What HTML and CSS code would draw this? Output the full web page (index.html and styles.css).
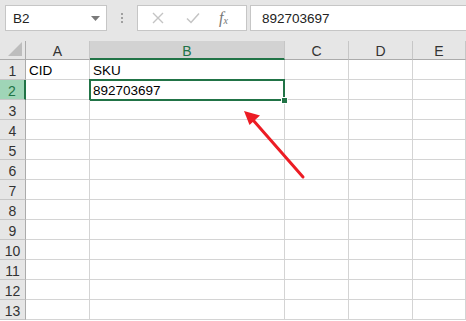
FILE: index.html
```html
<!DOCTYPE html>
<html lang="en">
<head>
    <meta charset="UTF-8">
    <title>Sheet</title>
    <link rel="stylesheet" href="styles.css">
</head>
<body>
    <div class="toolbar">
        <div class="name-box">
            <span>B2</span>
            <svg class="caret" width="9" height="5" viewBox="0 0 9 5"><path d="M0 0h9L4.5 5z" fill="#7a7a7a"/></svg>
        </div>
        <div class="grip"><i></i><i></i><i></i></div>
        <div class="buttons">
            <svg width="12" height="12" viewBox="0 0 12 12"><path d="M1 1l10 10M11 1L1 11" stroke="#c4c4c4" stroke-width="1.4"/></svg>
            <svg width="14" height="12" viewBox="0 0 14 12"><path d="M1 6.5l4 4L13 1.5" stroke="#c4c4c4" stroke-width="1.5" fill="none"/></svg>
            <span class="fx">f<sub>x</sub></span>
        </div>
        <div class="formula">892703697</div>
    </div>

    <div class="sheet">
        <div class="corner"><svg width="14" height="14" viewBox="0 0 14 14"><path d="M14 0v14H0z" fill="#bdbdbd"/></svg></div>
        <div class="col-head">A</div>
        <div class="col-head sel">B</div>
        <div class="col-head">C</div>
        <div class="col-head">D</div>
        <div class="col-head">E</div>

        <div class="row-head">1</div>
        <div class="cell">CID</div>
        <div class="cell">SKU</div>
        <div class="cell"></div><div class="cell"></div><div class="cell"></div>

        <div class="row-head sel">2</div>
        <div class="cell"></div>
        <div class="cell active">892703697<span class="handle"></span></div>
        <div class="cell"></div><div class="cell"></div><div class="cell"></div>

        <div class="row-head">3</div><div class="cell"></div><div class="cell"></div><div class="cell"></div><div class="cell"></div><div class="cell"></div>
        <div class="row-head">4</div><div class="cell"></div><div class="cell"></div><div class="cell"></div><div class="cell"></div><div class="cell"></div>
        <div class="row-head">5</div><div class="cell"></div><div class="cell"></div><div class="cell"></div><div class="cell"></div><div class="cell"></div>
        <div class="row-head">6</div><div class="cell"></div><div class="cell"></div><div class="cell"></div><div class="cell"></div><div class="cell"></div>
        <div class="row-head">7</div><div class="cell"></div><div class="cell"></div><div class="cell"></div><div class="cell"></div><div class="cell"></div>
        <div class="row-head">8</div><div class="cell"></div><div class="cell"></div><div class="cell"></div><div class="cell"></div><div class="cell"></div>
        <div class="row-head">9</div><div class="cell"></div><div class="cell"></div><div class="cell"></div><div class="cell"></div><div class="cell"></div>
        <div class="row-head">10</div><div class="cell"></div><div class="cell"></div><div class="cell"></div><div class="cell"></div><div class="cell"></div>
        <div class="row-head">11</div><div class="cell"></div><div class="cell"></div><div class="cell"></div><div class="cell"></div><div class="cell"></div>
        <div class="row-head">12</div><div class="cell"></div><div class="cell"></div><div class="cell"></div><div class="cell"></div><div class="cell"></div>
        <div class="row-head">13</div><div class="cell"></div><div class="cell"></div><div class="cell"></div><div class="cell"></div><div class="cell"></div>
    </div>

    <!-- annotation arrow -->
    <svg class="arrow" width="466" height="321" viewBox="0 0 466 321">
        <path d="M303 177L253 120" stroke="#ec1c24" stroke-width="3" stroke-linecap="round"/>
        <path d="M244 111l16 4.5-10.5 9.5z" fill="#ec1c24"/>
    </svg>
</body>
</html>
```

FILE: styles.css
```css
*{
    margin: 0;
    padding: 0;
    box-sizing: border-box;
}

body{
    width: 466px;
    height: 321px;
    overflow: hidden;
    background: #ffffff;
    font-family: "Liberation Sans", Arial, sans-serif;
    font-size: 13px;
    color: #000000;
    position: relative;
}

.toolbar{
    height: 41px;
    background: #e6e6e6;
    display: flex;
    align-items: flex-start;
    padding: 5px 0 0 5px;
}

.name-box{
    width: 102px;
    height: 26px;
    background: #ffffff;
    border: 1px solid #c6c6c6;
    display: flex;
    align-items: center;
    justify-content: space-between;
    padding: 0 6px 0 7px;
    font-size: 13.5px;
    color: #222;
}

.grip{
    width: 30px;
    height: 26px;
    display: flex;
    flex-direction: column;
    align-items: center;
    justify-content: center;
    gap: 2px;
}

.grip i{
    width: 2px;
    height: 2px;
    background: #a0a0a0;
}

.buttons{
    width: 110px;
    height: 26px;
    background: #ffffff;
    border: 1px solid #c6c6c6;
    display: flex;
    align-items: center;
    padding-left: 14px;
    gap: 22px;
}

.buttons .fx{
    font-family: "Liberation Serif", serif;
    font-style: italic;
    font-size: 16px;
    color: #777;
    margin-left: -3px;
}

.buttons .fx sub{
    font-size: 10px;
    vertical-align: -1px;
}

.formula{
    flex: 1;
    margin-left: 3px;
    height: 26px;
    background: #ffffff;
    border: 1px solid #c6c6c6;
    border-right: none;
    padding-left: 11px;
    display: flex;
    align-items: center;
    font-size: 13.5px;
    color: #222;
}

.sheet{
    display: grid;
    grid-template-columns: 26px 64px 195px 64px 64px 1fr;
    grid-template-rows: 19px repeat(13, 20px);
}

.corner,
.col-head,
.row-head{
    background: #e6e6e6;
    color: #333;
    display: flex;
    align-items: center;
    justify-content: center;
    border-right: 1px solid #ababab;
    border-bottom: 1px solid #ababab;
    font-size: 14px;
}

.corner{
    align-items: flex-end;
    justify-content: flex-end;
    padding: 0 3px 3px 0;
}

.col-head{
    border-right-color: #c6c6c6;
    border-bottom-color: #ababab;
    padding-top: 2px;
}

.col-head.sel{
    background: #d2d2d2;
    color: #217346;
    border-bottom: 2px solid #217346;
}

.row-head{
    border-bottom-color: #c6c6c6;
    border-right-color: #ababab;
    padding-top: 2px;
}

.row-head.sel{
    background: #9fd5b7;
    color: #217346;
    border-right: 2px solid #217346;
}

.cell{
    border-right: 1px solid #d4d4d4;
    border-bottom: 1px solid #d4d4d4;
    padding: 3px 0 0 3px;
    line-height: 16px;
    font-size: 13.5px;
    white-space: nowrap;
    position: relative;
}

.cell.active::after{
    content: "";
    position: absolute;
    left: -1px;
    top: -1px;
    right: -1px;
    bottom: -2px;
    border: 2px solid #217346;
}

.handle{
    position: absolute;
    right: -4px;
    bottom: -5px;
    width: 7px;
    height: 7px;
    background: #217346;
    border: 1px solid #ffffff;
    z-index: 2;
}

.arrow{
    position: absolute;
    left: 0;
    top: 0;
    pointer-events: none;
}
```
